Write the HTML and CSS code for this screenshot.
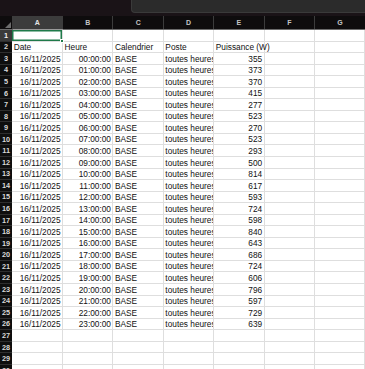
FILE: index.html
```html
<!DOCTYPE html>
<html lang="fr">
<head>
  <meta charset="UTF-8" />
  <title>Consommation</title>
  <link rel="stylesheet" href="styles.css">
</head>
<body>

<div class="topbar">
  <div class="formula"></div>
</div>

<table class="sheet">
  <colgroup>
    <col class="c-row" />
    <col /><col /><col /><col /><col /><col /><col />
  </colgroup>
  <thead>
    <tr>
      <th class="corner"><span class="tri"></span></th>
      <th class="sel">A</th><th>B</th><th>C</th><th>D</th><th>E</th><th>F</th><th>G</th>
    </tr>
  </thead>
  <tbody>
    <tr><th class="sel">1</th><td class="active"><span class="handle"></span></td><td></td><td></td><td></td><td></td><td></td><td></td></tr>
    <tr><th>2</th><td>Date</td><td>Heure</td><td>Calendrier</td><td>Poste</td><td class="over">Puissance (W)</td><td></td><td></td></tr>
    <tr><th>3</th><td class="num">16/11/2025</td><td class="num">00:00:00</td><td>BASE</td><td class="clip">toutes heures</td><td class="num">355</td><td></td><td></td></tr>
    <tr><th>4</th><td class="num">16/11/2025</td><td class="num">01:00:00</td><td>BASE</td><td class="clip">toutes heures</td><td class="num">373</td><td></td><td></td></tr>
    <tr><th>5</th><td class="num">16/11/2025</td><td class="num">02:00:00</td><td>BASE</td><td class="clip">toutes heures</td><td class="num">370</td><td></td><td></td></tr>
    <tr><th>6</th><td class="num">16/11/2025</td><td class="num">03:00:00</td><td>BASE</td><td class="clip">toutes heures</td><td class="num">415</td><td></td><td></td></tr>
    <tr><th>7</th><td class="num">16/11/2025</td><td class="num">04:00:00</td><td>BASE</td><td class="clip">toutes heures</td><td class="num">277</td><td></td><td></td></tr>
    <tr><th>8</th><td class="num">16/11/2025</td><td class="num">05:00:00</td><td>BASE</td><td class="clip">toutes heures</td><td class="num">523</td><td></td><td></td></tr>
    <tr><th>9</th><td class="num">16/11/2025</td><td class="num">06:00:00</td><td>BASE</td><td class="clip">toutes heures</td><td class="num">270</td><td></td><td></td></tr>
    <tr><th>10</th><td class="num">16/11/2025</td><td class="num">07:00:00</td><td>BASE</td><td class="clip">toutes heures</td><td class="num">523</td><td></td><td></td></tr>
    <tr><th>11</th><td class="num">16/11/2025</td><td class="num">08:00:00</td><td>BASE</td><td class="clip">toutes heures</td><td class="num">293</td><td></td><td></td></tr>
    <tr><th>12</th><td class="num">16/11/2025</td><td class="num">09:00:00</td><td>BASE</td><td class="clip">toutes heures</td><td class="num">500</td><td></td><td></td></tr>
    <tr><th>13</th><td class="num">16/11/2025</td><td class="num">10:00:00</td><td>BASE</td><td class="clip">toutes heures</td><td class="num">814</td><td></td><td></td></tr>
    <tr><th>14</th><td class="num">16/11/2025</td><td class="num">11:00:00</td><td>BASE</td><td class="clip">toutes heures</td><td class="num">617</td><td></td><td></td></tr>
    <tr><th>15</th><td class="num">16/11/2025</td><td class="num">12:00:00</td><td>BASE</td><td class="clip">toutes heures</td><td class="num">593</td><td></td><td></td></tr>
    <tr><th>16</th><td class="num">16/11/2025</td><td class="num">13:00:00</td><td>BASE</td><td class="clip">toutes heures</td><td class="num">724</td><td></td><td></td></tr>
    <tr><th>17</th><td class="num">16/11/2025</td><td class="num">14:00:00</td><td>BASE</td><td class="clip">toutes heures</td><td class="num">598</td><td></td><td></td></tr>
    <tr><th>18</th><td class="num">16/11/2025</td><td class="num">15:00:00</td><td>BASE</td><td class="clip">toutes heures</td><td class="num">840</td><td></td><td></td></tr>
    <tr><th>19</th><td class="num">16/11/2025</td><td class="num">16:00:00</td><td>BASE</td><td class="clip">toutes heures</td><td class="num">643</td><td></td><td></td></tr>
    <tr><th>20</th><td class="num">16/11/2025</td><td class="num">17:00:00</td><td>BASE</td><td class="clip">toutes heures</td><td class="num">686</td><td></td><td></td></tr>
    <tr><th>21</th><td class="num">16/11/2025</td><td class="num">18:00:00</td><td>BASE</td><td class="clip">toutes heures</td><td class="num">724</td><td></td><td></td></tr>
    <tr><th>22</th><td class="num">16/11/2025</td><td class="num">19:00:00</td><td>BASE</td><td class="clip">toutes heures</td><td class="num">606</td><td></td><td></td></tr>
    <tr><th>23</th><td class="num">16/11/2025</td><td class="num">20:00:00</td><td>BASE</td><td class="clip">toutes heures</td><td class="num">796</td><td></td><td></td></tr>
    <tr><th>24</th><td class="num">16/11/2025</td><td class="num">21:00:00</td><td>BASE</td><td class="clip">toutes heures</td><td class="num">597</td><td></td><td></td></tr>
    <tr><th>25</th><td class="num">16/11/2025</td><td class="num">22:00:00</td><td>BASE</td><td class="clip">toutes heures</td><td class="num">729</td><td></td><td></td></tr>
    <tr><th>26</th><td class="num">16/11/2025</td><td class="num">23:00:00</td><td>BASE</td><td class="clip">toutes heures</td><td class="num">639</td><td></td><td></td></tr>
    <tr><th>27</th><td></td><td></td><td></td><td></td><td></td><td></td><td></td></tr>
    <tr><th>28</th><td></td><td></td><td></td><td></td><td></td><td></td><td></td></tr>
    <tr><th>29</th><td></td><td></td><td></td><td></td><td></td><td></td><td></td></tr>
    <tr><th>30</th><td></td><td></td><td></td><td></td><td></td><td></td><td></td></tr>
  </tbody>
</table>

</body>
</html>
```

FILE: styles.css
```css
body {
  margin: 0;
  background: #ffffff;
  font-family: 'Liberation Sans', Arial, sans-serif;
  overflow: hidden;
}
.topbar {
  height: 16px;
  background: #1a1317;
}
.formula {
  margin-left: 131px;
  height: 12px;
  background: #2b2b2b;
  border-left: 1px solid #3a3a3a;
  border-bottom: 1px solid #3a3a3a;
  border-bottom-left-radius: 4px;
}
.sheet {
  border-collapse: collapse;
  table-layout: fixed;
  width: 365px;
}
.sheet col { width: 50.4px; }
.sheet col.c-row { width: 12.2px; }

/* column letters */
.sheet thead th {
  height: 13px;
  padding: 0;
  background: #0e0c0d;
  color: #c4c4c4;
  font-size: 7px;
  font-weight: bold;
  text-align: center;
  border-left: 1px solid #3c3c3c;
  border-bottom: 1px solid #6b6b6b;
}
.sheet thead th.sel {
  background: #3c3c3c;
  color: #e6e6e6;
  border-bottom: 1px solid #9a9a9a;
}
.sheet thead th.corner {
  border-left: none;
  position: relative;
}
.tri {
  position: absolute;
  right: 1px;
  bottom: 1px;
  width: 0;
  height: 0;
  border-left: 6px solid transparent;
  border-bottom: 6px solid #6c6c6c;
}

/* row numbers */
.sheet tbody th {
  height: 10.55px;
  padding: 0;
  background: #0e0e0e;
  color: #d8d8d8;
  font-size: 7.3px;
  font-weight: bold;
  text-align: center;
  border-bottom: 1px solid #2e2e2e;
}
.sheet tbody th.sel { background: #3a3a3a; color: #f0f0f0; }

.sheet td {
  padding: 0 1.5px;
  font-size: 8.3px;
  line-height: 10px;
  color: #111;
  white-space: nowrap;
  border-right: 1px solid #dedede;
  border-bottom: 1px solid #dedede;
  vertical-align: bottom;
}
.sheet td.num { text-align: right; }
.sheet td.clip { overflow: hidden; text-overflow: clip; }
.sheet td.over { overflow: visible; }

.sheet td.active {
  position: relative;
  box-shadow: inset 0 0 0 1.5px #1f7a4a;
}
.handle {
  position: absolute;
  right: -2px;
  bottom: -2px;
  width: 4px;
  height: 4px;
  background: #1f7a4a;
  border: 1px solid #fff;
  box-sizing: border-box;
}
```
